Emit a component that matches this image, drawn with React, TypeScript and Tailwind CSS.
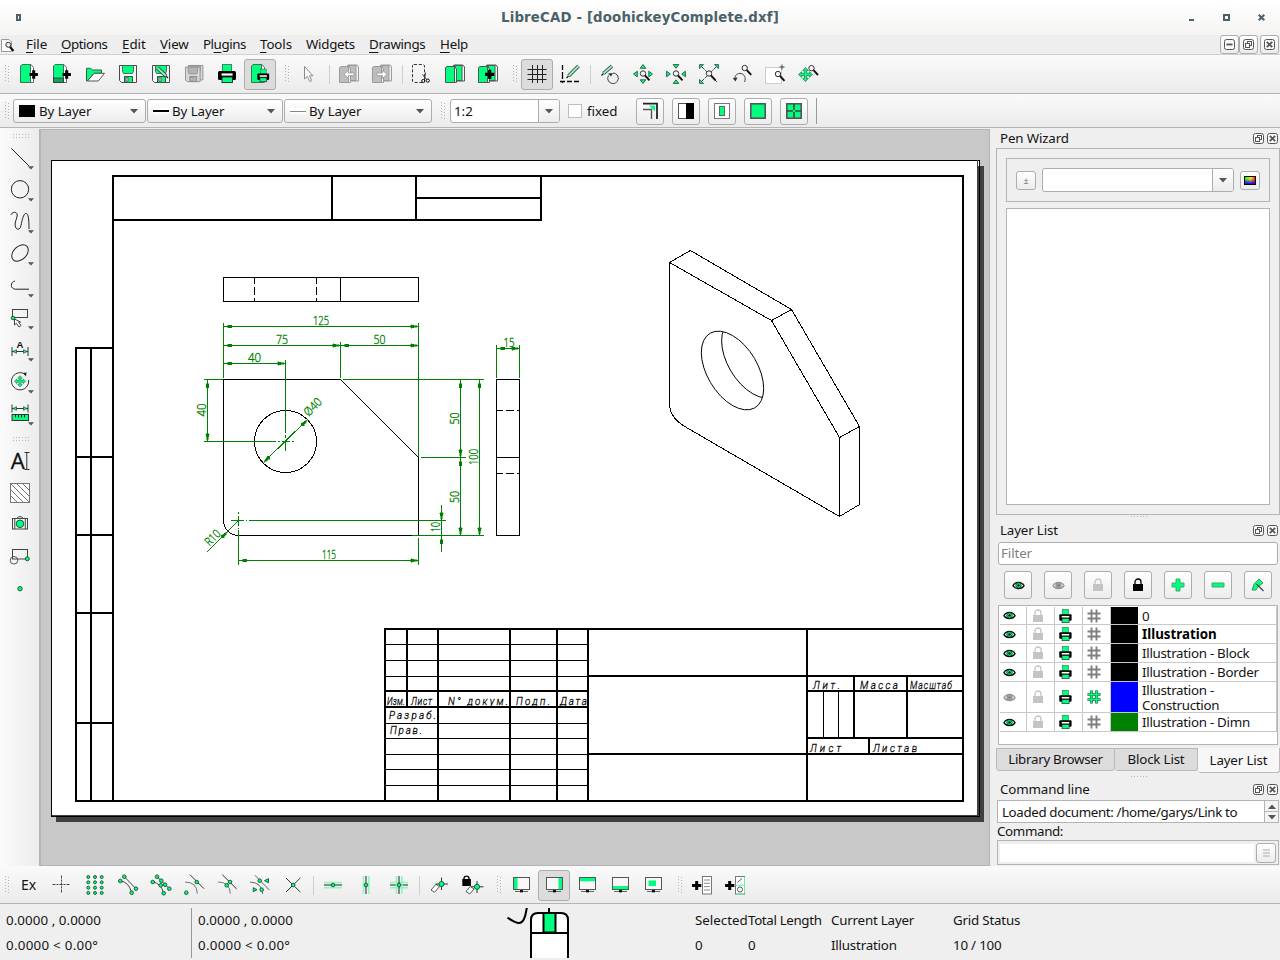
import React from "react";

const G = "#00ff7f";
const DK = "#3c3c3c";

/* ---------- small drawing primitives ---------- */

function Ico({ children, className = "" }: { children: React.ReactNode; className?: string }) {
  return (
    <svg viewBox="0 0 24 24" className={"h-6 w-6 shrink-0 overflow-visible " + className} fill="none" stroke={DK} strokeWidth={1}>
      {children}
    </svg>
  );
}

const Dot = ({ x, y, r = 1.8 }: { x: number; y: number; r?: number }) => (
  <circle cx={x} cy={y} r={r} fill={G} stroke="#14532d" strokeWidth={0.9} />
);

const Plus = ({ x, y, s = 4.2, w = 3 }: { x: number; y: number; s?: number; w?: number }) => (
  <path d={`M${x - s} ${y}H${x + s}M${x} ${y - s}V${y + s}`} stroke="#000" strokeWidth={w} />
);

const Mag = ({ x, y }: { x: number; y: number }) => (
  <g>
    <circle cx={x} cy={y} r={2.7} fill="#f4f4f4" stroke="#333" />
    <path d={`M${x + 2} ${y + 2}L${x + 6.5} ${y + 6.8}`} stroke="#111" strokeWidth={1.9} />
  </g>
);

const Move = ({ x, y, s }: { x: number; y: number; s: number }) => (
  <g transform={`translate(${x} ${y}) scale(${s / 6})`}>
    <path
      d="M0-6L2.4-3.4H1V-1H3.4V-2.4L6 0 3.4 2.4V1H1V3.4H2.4L0 6-2.4 3.4H-1V1H-3.4V2.4L-6 0-3.4-2.4V-1H-1V-3.4H-2.4Z"
      fill={G}
      stroke="#1f6b45"
      strokeWidth={0.6}
    />
  </g>
);

const Pencil = ({ x1, y1, x2, y2 }: { x1: number; y1: number; x2: number; y2: number }) => (
  <g>
    <path d={`M${x1} ${y1}L${x2} ${y2}`} stroke="#333" strokeWidth={3.6} />
    <path d={`M${x1} ${y1}L${x2} ${y2}`} stroke="#8df5bd" strokeWidth={1.9} />
    <path d={`M${x2} ${y2}l${x2 < x1 ? -2 : 2} 2`} stroke="#222" strokeWidth={1.2} />
  </g>
);

const Printer = () => (
  <g stroke="none">
    <rect x="7.5" y="2.5" width="9" height="7" fill={G} stroke="#2c6b4b" strokeWidth="0.8" />
    <rect x="3" y="9" width="18" height="9" rx="1.5" fill="#000" />
    <rect x="6.6" y="11.4" width="11" height="2.2" fill="#fff" />
    <rect x="7" y="15" width="10.4" height="5.6" fill={G} stroke="#222" strokeWidth="0.9" />
  </g>
);

const Floppy = ({ gray = false }: { gray?: boolean }) => (
  <g stroke={gray ? "#8a8a8a" : "#4a4a4a"}>
    <path d="M3.5 3.5H20.5V20.5H5.5L3.5 18.5Z" fill={gray ? "#d8d8d8" : "#f6f6f6"} />
    <path d="M6.5 3.5H17.5V9.5L16.5 11.5H7.5L6.5 9.5Z" fill={gray ? "#b3b3b3" : G} strokeWidth="0.8" />
    <rect x="8.5" y="14.5" width="8" height="6" fill={gray ? "#b3b3b3" : G} />
    <rect x="10" y="15.8" width="2" height="3.4" fill="#eee" strokeWidth="0.8" />
  </g>
);

const PagePair = ({ gray = false }: { gray?: boolean }) => (
  <g stroke={gray ? "#9a9a9a" : "#555"}>
    <path d="M11 3H20L21.5 5V19H11Z" fill="#f4f4f4" />
    <rect x="10.5" y="3.5" width="8.5" height="15" fill={gray ? "#bdbdbd" : G} />
    <path d="M2.5 5.5L4 4.5H12.5V20.5H2.5Z" fill={gray ? "#bdbdbd" : G} />
    <path d="M11.5 5L13.5 7V20.5H11.5Z" fill="#f4f4f4" />
  </g>
);

const NewDoc = ({ template = false }: { template?: boolean }) => (
  <g>
    <path d="M12 2.5H14L16.5 5.5V20.5H12Z" fill="#fafafa" stroke="#666" />
    <path d="M3.5 4L5 2.5H13.5V20.5H3.5Z" fill={G} stroke="#4a6a5a" />
    {template && <rect x="3.5" y="16" width="10" height="4.5" fill="#14a35c" stroke="#333" strokeWidth="0.8" />}
    <Plus x={16.7} y={12.5} />
  </g>
);

const Monitor = ({ x, y, w, h }: { x: number; y: number; w: number; h: number }) => (
  <g>
    <rect x="4.5" y="4.5" width="16" height="12" fill="#f7f7f7" stroke="#555" />
    <rect x={x} y={y} width={w} height={h} fill={G} stroke="none" />
    <path d="M6 18.5H19" stroke="#666" />
    <path d="M11 18.2H14" stroke="#000" strokeWidth="2.2" />
  </g>
);

/* ---------- icon tables ---------- */

const topIcons: Record<string, React.ReactNode> = {
  new: <NewDoc />,
  newTemplate: <NewDoc template />,
  open: (
    <g>
      <path d="M3.5 19V6.3H7.5L9.5 8H18.5V11.3H11L4.5 19Z" fill={G} stroke="#3a5a4a" />
      <path d="M4.5 19L11.3 11.3H21.5L15.3 19Z" fill="#fff" stroke="#555" />
    </g>
  ),
  save: <Floppy />,
  saveAs: (
    <g>
      <Floppy />
      <Pencil x1={8.5} y1={6} x2={17} y2={14} />
    </g>
  ),
  saveAll: (
    <g>
      <g transform="translate(3.5 0.5) scale(.85)"><Floppy gray /></g>
      <g transform="translate(0.5 2) scale(.86)"><Floppy gray /></g>
    </g>
  ),
  print: <Printer />,
  preview: (
    <g>
      <path d="M12 2.5H14L16.5 5.5V20.5H12Z" fill="#fafafa" stroke="#666" />
      <path d="M3.5 4L5 2.5H13.5V20.5H3.5Z" fill={G} stroke="#4a6a5a" />
      <g transform="translate(7.3 5.3) scale(.66 .7)"><Printer /></g>
    </g>
  ),
  select: <path d="M7.5 4.5V17L10.3 14.5L12.8 19.6L14.8 18.6L12.5 13.8H16Z" fill="#f8f8f8" stroke="#8c8c8c" />,
  undo: (
    <g>
      <PagePair gray />
      <path d="M7 12.3L11.5 8.3V11H17V13.6H11.5V16.4Z" fill="#fff" stroke="#999" strokeWidth=".8" />
    </g>
  ),
  redo: (
    <g>
      <PagePair gray />
      <path d="M17 12.3L12.5 8.3V11H7V13.6H12.5V16.4Z" fill="#fff" stroke="#999" strokeWidth=".8" />
    </g>
  ),
  cut: (
    <g>
      <rect x="2.5" y="2.5" width="12" height="18" rx="1.5" strokeDasharray="3 1.8" stroke="#333" />
      <path d="M15.5 10.5L14.3 18M12.5 12.5L17 18" stroke="#333" />
      <circle cx="13.3" cy="19" r="1.6" stroke="#111" />
      <circle cx="17.8" cy="18.6" r="1.6" stroke="#111" />
    </g>
  ),
  copy: <PagePair />,
  paste: (
    <g>
      <PagePair />
      <Plus x={13.7} y={12.3} s={4.6} w={3.2} />
    </g>
  ),
  grid: <path d="M2.5 7.5H21.5M2.5 12.5H21.5M2.5 17.5H21.5M7.5 3V21M12.5 3V21M17.5 3V21" stroke="#222" />,
  draft: (
    <g>
      <path d="M4.5 3V21" stroke="#000" strokeDasharray="5 2 7 2" strokeWidth="1.3" />
      <path d="M2 19.5H22" stroke="#000" strokeDasharray="5 2" strokeWidth="1.3" />
      <Pencil x1={20.5} y1={4} x2={10.5} y2={14} />
    </g>
  ),
  redraw: (
    <g>
      <Pencil x1={14} y1={4} x2={5.5} y2={11.5} />
      <path d="M10.5 13.5A5.3 5.3 0 1 0 15 11" stroke="#444" />
      <path d="M10 11.5L15 11 13 14.5Z" fill="#333" stroke="none" />
    </g>
  ),
  zoomIn: (
    <g>
      <g fill={G} stroke="#1f5a3c" strokeWidth=".9">
        <path d="M12 2.5L14.8 6.3H9.2Z" />
        <path d="M12 21.5L14.8 17.8H9.2Z" />
        <path d="M2.5 12L6.3 9.2V14.8Z" />
        <path d="M21.5 12L17.8 9.2V14.8Z" />
      </g>
      <Mag x={12} y={11.5} />
    </g>
  ),
  zoomOut: (
    <g>
      <g fill={G} stroke="#1f5a3c" strokeWidth=".9">
        <path d="M12 6.3L14.8 2.6H9.2Z" />
        <path d="M12 17.8L14.8 21.4H9.2Z" />
        <path d="M6.3 12L2.6 9.2V14.8Z" />
        <path d="M17.8 12L21.4 9.2V14.8Z" />
      </g>
      <Mag x={12} y={11.5} />
    </g>
  ),
  zoomAuto: (
    <g>
      <path d="M4 4L20 20M20 4L4 20" stroke="#444" strokeDasharray="5 1" />
      <g fill={G} stroke="#1f5a3c" strokeWidth=".9">
        <path d="M2.6 2.6H6.5L2.6 6.5Z" />
        <path d="M21.4 2.6H17.5L21.4 6.5Z" />
        <path d="M2.6 21.4V17.5L6.5 21.4Z" />
      </g>
      <Mag x={12} y={11.5} />
    </g>
  ),
  zoomPrev: (
    <g>
      <path d="M5 17.5C4.5 12.5 8 11 11 11.5S16.5 15.5 14.5 20" stroke="#444" />
      <path d="M2.8 16L7.6 15.4 5.5 19.5Z" fill="#333" stroke="none" />
      <Mag x={14.7} y={6} />
    </g>
  ),
  zoomWindow: (
    <g>
      <rect x="2.5" y="5.5" width="16" height="16" fill="#fff" stroke="#ccc" />
      <path d="M16.5 5H21.5M19 2.5V7.5" stroke="#444" />
      <Mag x={15} y={12} />
    </g>
  ),
  zoomPan: (
    <g>
      <Move x={9.5} y={12.5} s={7} />
      <Mag x={15.5} y={6.2} />
    </g>
  ),
};

const HaloH = () => (
  <g>
    <path d="M3 9.5H21M3 14.8H21" stroke="#8ef7c0" strokeWidth="1.6" />
    <path d="M3 12H21" stroke="#222" />
  </g>
);
const HaloV = () => (
  <g>
    <path d="M9.5 3V21M14.8 3V21" stroke="#8ef7c0" strokeWidth="1.6" />
    <path d="M12 3V21" stroke="#222" />
  </g>
);

const snapIcons: Record<string, React.ReactNode> = {
  free: <path d="M2.5 11.5H20.5M11.5 2.5V20.5" stroke="#444" strokeDasharray="3 1 2 1" />,
  grid: (
    <g>
      {[5.3, 12, 18.7].map((x) => [4, 9.3, 14.7, 19.9].map((y) => <Dot key={`${x}-${y}`} x={x} y={y} r={1.5} />))}
    </g>
  ),
  endpoint: (
    <g>
      <path d="M8.3 3.7L20 15.7M4.3 8Q13 9 15.7 19.7" stroke="#444" />
      <Dot x={8.3} y={3.7} /><Dot x={4.3} y={8} /><Dot x={20} y={15.7} /><Dot x={15.7} y={19.7} />
    </g>
  ),
  entity: (
    <g>
      <path d="M8 3.7L20.3 15.7M3.7 9Q12 10 14.7 20.3" stroke="#444" />
      {[[8, 3.7], [3.7, 9], [12.3, 7.7], [11.7, 12.3], [16, 11.7], [20.3, 15.7], [14.7, 20.3]].map(([x, y]) => (
        <Dot key={`${x}-${y}`} x={x} y={y} />
      ))}
    </g>
  ),
  center: (
    <g>
      <path d="M8 1.7L22 15.7" stroke="#333" /><path d="M3 9Q15 9 15.3 20.7" stroke="#777" />
      <Dot x={14.7} y={9} /><Dot x={4.3} y={19.7} />
    </g>
  ),
  middle: (
    <g>
      <path d="M7.3 1.7L21.7 16" stroke="#333" /><path d="M3 9Q15 9 15.3 20.7" stroke="#777" />
      <Dot x={15} y={9} /><Dot x={11.7} y={12.3} />
    </g>
  ),
  distance: (
    <g>
      <path d="M7 2.3L21.3 17M2 9Q14 9.5 14.7 21" stroke="#666" />
      <Dot x={11.7} y={7.7} /><Dot x={13.7} y={16.7} />
      <path d="M16.5 7.7L20.5 5.7V9.7Z M9 16.7L5.3 14.7V18.7Z" fill={G} stroke="#14532d" strokeWidth=".9" />
    </g>
  ),
  intersection: (
    <g>
      <path d="M5 5L19.3 19M19.3 5L5 19" stroke="#333" />
      <Dot x={12.2} y={12} />
    </g>
  ),
  horiz: <g><HaloH /><Dot x={12} y={12} /></g>,
  vert: <g><HaloV /><Dot x={12} y={12} /></g>,
  ortho: <g><HaloH /><HaloV /><Dot x={12} y={12} /></g>,
  relZero: (
    <g>
      <path d="M4 17L9 11.3L12.5 13.7L7.5 19.3Z" fill="#fff" stroke="#555" />
      <path d="M8.5 11H21M14.5 4.5V17" stroke="#333" />
      <Dot x={14.5} y={11} r={2.6} />
    </g>
  ),
  lockZero: (
    <g>
      <path d="M4 6V5A2.6 2.6 0 0 1 9 5V6" stroke="#000" strokeWidth="1.4" />
      <rect x="2.3" y="6" width="8.6" height="7" fill="#000" stroke="none" />
      <path d="M6 18.5L10.3 13.5L14 16L9.7 21Z" fill="#fff" stroke="#555" />
      <path d="M11 13.8H23.5M17 8V20" stroke="#333" />
      <Dot x={17} y={13.8} r={2.6} />
    </g>
  ),
  dockLeft: <Monitor x={5} y={5} w={3.5} h={11} />,
  dockRight: <Monitor x={16.5} y={5} w={3.5} h={11} />,
  dockTop: <Monitor x={5} y={5} w={15} h={3.3} />,
  dockBottom: <Monitor x={5} y={13} w={15} h={3} />,
  dockFloat: <Monitor x={7.5} y={7.5} w={7.5} h={5.5} />,
  addMenu: (
    <g>
      <Plus x={6.7} y={12.5} s={4.6} />
      <rect x="12.5" y="3.5" width="9" height="17.5" fill="#fff" stroke="#777" />
      <path d="M14 7H20M14 10.3H20M14 13.6H20M14 17H20" stroke="#888" />
    </g>
  ),
  addToolbar: (
    <g>
      <Plus x={6.7} y={12.5} s={4.6} />
      <rect x="12.5" y="3.5" width="9" height="17.5" fill="#fff" stroke="#777" />
      <path d="M12.5 12.2H21.5M13 20.8H21.5M21.5 4V20" stroke="#65f0a6" />
      <path d="M14.5 9.5L19 5.5" stroke="#555" />
      <circle cx="17" cy="16.5" r="2.6" stroke="#555" />
    </g>
  ),
};

const Drop = () => <path d="M19.8 20.2H26L23 23.6Z" fill="#555" stroke="none" />;

const sideIcons: React.ReactNode[] = [
  <path d="M3.3 2.3L21 20" stroke="#222" />,
  <circle cx="12" cy="11.3" r="8.7" stroke="#222" />,
  <path d="M3 5C3.5 2 9.3 1 9.2 5C9 9 6.5 12 7.2 15.5C8 20.5 12 20.5 13 15.5C14 10 15.5 4 17.7 3.4C20.5 3 21 10 21 19" stroke="#222" />,
  <ellipse cx="12" cy="11" rx="9.6" ry="6.6" transform="rotate(-45 12 11)" stroke="#222" />,
  <path d="M7 7C2 8 2 15 7.5 15.2H21" stroke="#222" />,
  <g>
    <rect x="4.5" y="3.5" width="15" height="8" stroke="#444" />
    <path d="M6.5 13V19L8.3 17.3L11 21L13 19.5L10.5 16H12.5Z" fill="#fff" stroke="#444" />
    <Dot x={5} y={12} />
  </g>,
  <g>
    <path d="M4 9V18M20 9V18M4 13.5H20" stroke="#333" />
    <path d="M5 13.5L8.5 11.7V15.3ZM19 13.5L15.5 11.7V15.3Z" fill={G} stroke="#14532d" strokeWidth=".7" />
    <text x="12" y="10.2" textAnchor="middle" fontSize="9.5" fontWeight="bold" fontFamily="Liberation Sans, sans-serif" fill="#111" stroke="none">A</text>
  </g>,
  <g>
    <path d="M17 4.2A8.6 8.6 0 1 0 20.6 10" stroke="#333" />
    <path d="M15 3L18.5 2.5L18 6.5Z" fill="#222" stroke="none" />
    <Move x={12} y={11.3} s={5.6} />
  </g>,
  <g>
    <path d="M4 2.5V10.5M20 2.5V10.5M4 6.5H20" stroke="#333" />
    <path d="M5 6.5L8.5 4.7V8.3ZM19 6.5L15.5 4.7V8.3Z" fill={G} stroke="#14532d" strokeWidth=".7" />
    <rect x="4" y="12.5" width="16.5" height="6" fill={G} stroke="#333" />
    <path d="M7.5 13V15.5M10.5 13V15.5M13.5 13V15.5M16.5 13V15.5" stroke="#222" />
  </g>,
];

const sideIcons2: React.ReactNode[] = [
  <g>
    <text x="2.8" y="20" fontSize="21.5" fontFamily="Open Sans, sans-serif" fill="#111" stroke="#111" strokeWidth=".3" textLength="14" lengthAdjust="spacingAndGlyphs">A</text>
    <path d="M16.5 3.5H21.5M18.8 3.5V20.5M16.5 20.5H21.5" stroke="#333" />
  </g>,
  <g>
    <rect x="2.5" y="2.5" width="19" height="19" stroke="#777" fill="#fff" />
    <path d="M3 15L9 21M3 9L15 21M3 3L21 21M9 3L21 15M15 3L21 9" stroke="#777" />
  </g>,
  <g>
    <rect x="4.5" y="5.5" width="15" height="10.5" stroke="#444" fill="#f6f6f6" />
    <path d="M9 5.5C9.5 3 14.5 3 15 5.5M6.8 6V16M17.3 6V16" stroke="#444" />
    <circle cx="12" cy="10.8" r="3.8" fill={G} stroke="#1f5a3c" />
  </g>,
  <g>
    <rect x="4.5" y="4.5" width="15" height="9.5" stroke="#444" />
    <circle cx="6" cy="15.3" r="3.8" stroke="#555" />
    <Dot x={19.3} y={13.8} r={2} />
  </g>,
  <Dot x={12} y={11.7} r={2.2} />,
];

/* ---------- widgets ---------- */

const GripV = () => (
  <svg viewBox="0 0 6 18" className="h-[18px] w-[6px] shrink-0 self-center" fill="#b4b4b4" shapeRendering="crispEdges">
    {[0, 3, 6, 9, 12, 15].map((y) => (
      <g key={y}><rect x="0" y={y} width="1" height="1" /><rect x="3" y={y + 1} width="1" height="1" /></g>
    ))}
  </svg>
);

const GripH = ({ rows = 2 }: { rows?: number }) => (
  <svg viewBox="0 0 18 5" className="h-[5px] w-[18px] shrink-0" fill="#b4b4b4" shapeRendering="crispEdges">
    {[0, 3, 6, 9, 12, 15].map((x) => (
      <g key={x}><rect x={x} y="0" width="1" height="1" />{rows > 1 && <rect x={x} y="3" width="1" height="1" />}</g>
    ))}
  </svg>
);

function ToolCell({ icon, active = false }: { icon: React.ReactNode; active?: boolean }) {
  return (
    <div className="flex h-8 w-[33px] shrink-0 pt-px">
      <div className={active
        ? "h-[31px] w-8 rounded-[3px] border border-[#adadad] bg-[#dcdcdc] pt-[2px] pl-[3px]"
        : "h-[31px] w-8 pt-[3px] pl-1"}>
        <Ico>{icon}</Ico>
      </div>
    </div>
  );
}

const Sep = () => (
  <div className="flex h-8 w-[7px] shrink-0 items-center pl-[3px]"><div className="h-[19px] w-px bg-[#cfcfcf]" /></div>
);
const GripCell = () => <div className="flex h-8 w-4 shrink-0 items-center pl-2"><GripV /></div>;

function ToolRow({ items, table }: { items: string[]; table: Record<string, React.ReactNode> }) {
  return (
    <>
      {items.map((n, i) =>
        n === "|" ? <Sep key={i} /> : n === ":" ? <GripCell key={i} /> : (
          <ToolCell key={i} icon={table[n.replace("*", "")]} active={n.endsWith("*")} />
        )
      )}
    </>
  );
}

const Caret = () => (
  <svg viewBox="0 0 8 5" className="h-[5px] w-2 shrink-0"><path d="M0 0H8L4 4.6Z" fill="#555" /></svg>
);

const frame = "border border-[#adadad] rounded-[3px] bg-linear-to-b from-white to-[#ececec]";

function Combo({ width, children }: { width: string; children: React.ReactNode }) {
  return (
    <div className={`${frame} ${width} flex h-6 shrink-0 items-center pr-[7px]`}>
      {children}
      <span className="grow pt-[2px] tracking-[-0.1px]">By Layer</span>
      <Caret />
    </div>
  );
}

function SquareBtn({ children, size }: { children: React.ReactNode; size: string }) {
  return <div className={`${frame} ${size} flex shrink-0 items-center justify-center`}>{children}</div>;
}

const WinGlyph = ({ kind }: { kind: "min" | "restore" | "close" }) => (
  <svg viewBox="0 0 11 11" className="h-[11px] w-[11px] shrink-0" fill="none" stroke="#555">
    <rect x=".5" y=".5" width="10" height="10" rx="2" fill="#f8f8f8" />
    {kind === "min" && <path d="M2.5 5.5H8.5" strokeWidth="1.8" />}
    {kind === "restore" && <g><rect x="4.5" y="2.5" width="4" height="4" /><rect x="2.5" y="4.5" width="4" height="4" fill="#f8f8f8" /></g>}
    {kind === "close" && <path d="M2.8 2.8L8.2 8.2M8.2 2.8L2.8 8.2" strokeWidth="1.8" />}
  </svg>
);

function DockTitle({ text, className }: { text: string; className: string }) {
  return (
    <div className={`${className} flex shrink-0 items-center pr-[2px] pl-[10px]`}>
      <span className="grow tracking-[-0.15px]">{text}</span>
      <div className="flex gap-[3px] pb-px"><WinGlyph kind="restore" /><WinGlyph kind="close" /></div>
    </div>
  );
}

const Eye = ({ on = true }: { on?: boolean }) => (
  <svg viewBox="0 0 14 10" className="h-[9px] w-[13px]">
    <path d="M.7 5.2C3.5.2 10.5.2 13.3 5.2C10.5 9.6 3.5 9.6.7 5.2Z" fill={on ? "#c9ffe3" : "#e4e4e4"} stroke={on ? "#000" : "#999"} strokeWidth="1.3" />
    <circle cx="7" cy="4.9" r="3" fill={on ? G : "#aaa"} stroke={on ? "#0a3d24" : "#888"} />
    <circle cx="7" cy="4.9" r="1.3" fill={on ? "#000" : "#777"} />
  </svg>
);

const Lock = ({ on = false }: { on?: boolean }) => (
  <svg viewBox="0 0 12 14" className="h-[14px] w-3">
    <path d="M3 6V4A3 3 0 0 1 9 4V6" fill="none" stroke={on ? "#000" : "#c4c4c4"} strokeWidth="1.3" />
    <rect x="1" y="6" width="10" height="7" fill={on ? "#000" : "#c4c4c4"} />
  </svg>
);

const Hash = ({ on = false }: { on?: boolean }) => (
  <svg viewBox="0 0 14 14" className="h-[14px] w-[14px]" fill="none">
    <path d="M4.5 .5V13.5M9.5 .5V13.5M.5 4.5H13.5M.5 9.5H13.5" stroke={on ? "#14532d" : "#808080"} strokeWidth={on ? 2.6 : 1.9} />
    {on && <path d="M4.5 1V13M9.5 1V13M1 4.5H13M1 9.5H13" stroke={G} strokeWidth="1.5" />}
  </svg>
);

const layers = [
  { name: "0", h: "h-[18px]", color: "bg-black", on: true, con: false },
  { name: "Illustration", h: "h-[19px]", color: "bg-black", on: true, con: false, bold: true },
  { name: "Illustration - Block", h: "h-[19px]", color: "bg-black", on: true, con: false },
  { name: "Illustration - Border", h: "h-[19px]", color: "bg-black", on: true, con: false },
  { name: "Illustration - Construction", h: "h-[31px]", color: "bg-[#0000ff]", on: false, con: true },
  { name: "Illustration - Dimn", h: "h-[19px]", color: "bg-[#008000]", on: true, con: false },
];

/* ---------- drawing ---------- */

const T = ({ x, y, w, s, size = 11.8, rot = 0 }: { x: number; y: number; w: number; s: string; size?: number; rot?: number }) => (
  <text x={x} y={y} textLength={w} lengthAdjust="spacingAndGlyphs" fontSize={size}
    fontFamily="Open Sans, Noto Sans, sans-serif" fontWeight={300} transform={rot ? `rotate(${rot} ${x} ${y})` : undefined}>{s}</text>
);

/* condensed oblique lettering: glyphs are narrowed, then spread over the given width */
const R = ({ x, y, w, s, k = 0.85 }: { x: number; y: number; w: number; s: string; k?: number }) => (
  <text transform={`translate(${x} ${y}) scale(${k} 1)`} textLength={w / k} lengthAdjust="spacing" fontSize={11.6} fontStyle="italic"
    fontWeight={300} fontFamily="Roboto, Liberation Sans, sans-serif">{s}</text>
);

/* filled arrow tip at x,y pointing along the given angle */
const Tip = ({ x, y, a }: { x: number; y: number; a: number }) => (
  <path d="M0 0L-8-1.7V1.7Z" transform={`translate(${x + 0.5} ${y + 0.5}) rotate(${a})`} fill="#008000" stroke="#008000" strokeWidth=".5" />
);

function Drawing() {
  return (
    <svg viewBox="41 130 948 735" className="h-[735px] w-[948px]" fill="none" shapeRendering="crispEdges">
      <rect x="56" y="166" width="928" height="656" fill="#404040" />
      <rect x="51" y="160" width="928" height="656" fill="#fff" />
      <rect x="977" y="166" width="3" height="650" fill="#404040" />
      <rect x="51.5" y="160.5" width="928" height="656" stroke="#000" />
      <path d="M977.5 160V166M52 815.5H979" stroke="#404040" />

      <g stroke="#000" strokeWidth="2">
        <path d="M113 175V801M112 176H964M963 175V802M75 801H964" />
        <path d="M113 220H541V176M332 176V220M416 176V220M416 198H541" />
        <path d="M113 348H76V801M91 348V801M76 457H113M76 535H113M76 613H113M76 723H113" />
        <path d="M385 801V629H963M407 629V707M438 629V801M510 629V801M557 629V801M588 629V801M385 691H588M385 707H588" />
        <path d="M588 676H963M588 754H963M807 629V801M807 691H963M807 738H963M854 676V738M907 676V738M869 738V754" />
      </g>

      <g transform="translate(.5 .5)" stroke="#000">
        <path d="M385 644H588M385 660H588M385 676H588M385 723H588M385 738H588M385 754H588M385 769H588M385 785H588M823 691V738M838 691V738" />
        <path d="M223 277H418V301H223ZM340 277V301" />
        <path d="M254 277V283M254 286V294M254 297V301M316 277V283M316 286V294M316 297V301" />
        <path d="M223 379H340L418 457V535H238A15 15 0 0 1 223 520Z" />
        <circle cx="285" cy="441" r="31" />
        <path d="M496 379H519V535H496ZM496 457H519M496 410H502M505 410H513M516 410H519M496 473H502M505 473H513M516 473H519" />
        <path d="M669 262L690 250L791 309L859 426V504L839 516L686 427C675 421 669 413 669 403ZM669 262L771 320L839 437V516M771 320L791 309M839 437L859 426" />
        <clipPath id="bore"><ellipse rx="36" ry="35" transform="matrix(.866 .5 0 1 732 370)" /></clipPath>
        <ellipse rx="36" ry="35" transform="matrix(.866 .5 0 1 732 370)" vectorEffect="non-scaling-stroke" />
        <g clipPath="url(#bore)">
          <ellipse rx="36" ry="35" transform="matrix(.866 .5 0 1 752.3 358.3)" vectorEffect="non-scaling-stroke" />
        </g>
      </g>

      <g transform="translate(.5 .5)" stroke="#008000">
        <path d="M223 322V377M418 322V456M223 326H418M223 345H418M340 341V377M223 363H285M285 359V432M285 434V437M285 439V450" />
        <path d="M203 379H222M203 441H275M277 441H279M281 441H289M291 441H293M207 379V441" />
        <path d="M342 379H483M411 535H483M420 457H465M460 379V535M479 379V535" />
        <path d="M496 344V377M519 344V377M496 348H519" />
        <path d="M230 520H243M245 520H246M248 520H445M238 511V513M238 515V525M238 527V528M238 529V564M418 537V564M238 560H418" />
        <path d="M441 504V551M263 462L307 419M206 552L238 520" />
      </g>
      <g>
        <Tip x={223} y={326} a={180} /><Tip x={418} y={326} a={0} />
        <Tip x={223} y={345} a={180} /><Tip x={340} y={345} a={0} /><Tip x={340} y={345} a={180} /><Tip x={418} y={345} a={0} />
        <Tip x={223} y={363} a={180} /><Tip x={285} y={363} a={0} />
        <Tip x={207} y={379} a={-90} /><Tip x={207} y={441} a={90} />
        <Tip x={460} y={379} a={-90} /><Tip x={460} y={457} a={90} /><Tip x={460} y={457} a={-90} /><Tip x={460} y={535} a={90} />
        <Tip x={479} y={379} a={-90} /><Tip x={479} y={535} a={90} />
        <Tip x={496} y={348} a={180} /><Tip x={519} y={348} a={0} />
        <Tip x={238} y={560} a={180} /><Tip x={418} y={560} a={0} />
        <Tip x={441} y={520} a={90} /><Tip x={441} y={535} a={-90} />
        <Tip x={263} y={462} a={135} /><Tip x={307} y={419} a={-45} /><Tip x={227} y={531} a={-45} />
      </g>
      <g fill="#008000" stroke="#008000" strokeWidth=".35">
        <T x={313} y={325} w={16} s="125" /><T x={276} y={343.5} w={12} s="75" /><T x={373.5} y={343.5} w={12} s="50" />
        <T x={248} y={362} w={13} s="40" /><T x={503.5} y={347} w={11} s="15" /><T x={322} y={559} w={14} s="115" />
        <T x={206} y={416.5} w={13} s="40" rot={-90} /><T x={459} y={424.5} w={12} s="50" rot={-90} />
        <T x={459} y={503} w={12} s="50" rot={-90} /><T x={478} y={465} w={16} s="100" rot={-90} />
        <T x={440} y={532} w={10} s="10" rot={-90} /><T x={308.5} y={417} w={20} s="Ø40" rot={-45} />
        <T x={209.5} y={546.5} w={17} s="R10" rot={-45} />
      </g>
      <g fill="#000" stroke="#000" strokeWidth=".3">
        <R x={387} y={705} w={18} s="Изм." k={0.7} /><R x={411} y={705} w={21} s="Лист" k={0.75} /><R x={448} y={705} w={60} s="N° докум." />
        <R x={516} y={705} w={34} s="Подп." /><R x={560} y={705} w={27} s="Дата" />
        <R x={389} y={719.4} w={47} s="Разраб." /><R x={390} y={734} w={32} s="Прав." />
        <R x={813} y={689} w={27} s="Лит." /><R x={860} y={689} w={38} s="Масса" /><R x={910} y={689} w={42} s="Масштаб" k={0.75} />
        <R x={810} y={752} w={31} s="Лист" /><R x={873} y={752} w={44} s="Листав" />
      </g>
    </svg>
  );
}

/* ---------- page ---------- */

const menus: [string, string, string, string][] = [
  ["", "F", "ile", "w-[35px]"], ["", "O", "ptions", "w-[61px] tracking-[-0.45px]"], ["", "E", "dit", "w-[38px]"], ["", "V", "iew", "w-[43px] tracking-[-0.15px]"],
  ["Pl", "u", "gins", "w-[57px] tracking-[-0.45px]"], ["", "T", "ools", "w-[46px] tracking-[-0.1px]"], ["Widgets", "", "", "w-[63px] tracking-[-0.3px]"], ["", "D", "rawings", "w-[71px] tracking-[-0.35px]"],
  ["", "H", "elp", "w-[40px] tracking-[-0.25px]"],
];

const statusGroups: [string, string, string][] = [
  ["Selected", "0", "w-[53px]"],
  ["Total Length", "0", "w-[83px] tracking-[-0.35px]"],
  ["Current Layer", "Illustration", "w-[122px] tracking-[-0.2px]"],
  ["Grid Status", "10 / 100", "w-[100px] tracking-[-0.2px]"],
];

const Coords = () => (
  <>
    <div className="h-[25px] leading-[25px] tracking-[0.07px]">0.0000 , 0.0000</div>
    <div className="h-[25px] leading-[25px] tracking-[0.28px]">0.0000 &lt; 0.00°</div>
  </>
);

export default function App() {
  return (
    <div className="flex h-[960px] w-[1280px] flex-col overflow-hidden bg-[#efefef] font-['Noto_Sans',sans-serif] text-[13.33px] leading-none whitespace-nowrap text-[#141414]">
      {/* title bar */}
      <div className="flex h-[35px] shrink-0 items-center bg-linear-to-b from-white to-[#f5f4f3] text-[#4b616a]">
        <div className="w-[200px] pl-4">
          <svg viewBox="0 0 5 7" className="h-[7px] w-[5px]" fill="#4b616a" shapeRendering="crispEdges"><path d="M0 0H5V7H0ZM2 2V5H3V2Z" fillRule="evenodd" /></svg>
        </div>
        <div className="grow text-center font-['DejaVu_Sans',sans-serif] text-[13.33px] font-bold tracking-[0.15px]">LibreCAD - [doohickeyComplete.dxf]</div>
        <div className="flex w-[200px] items-center justify-end gap-7 pr-[15px]">
          <svg viewBox="0 0 7 7" className="h-[7px] w-[7px]"><path d="M1 5H6V7H1Z" fill="currentColor" /></svg>
          <svg viewBox="0 0 7 7" className="h-[7px] w-[7px]"><rect x="1" y="1" width="5" height="5" fill="none" stroke="currentColor" strokeWidth="2" /></svg>
          <svg viewBox="0 0 7 7" className="h-[7px] w-[7px]"><path d="M.7 .7L6.3 6.3M6.3 .7L.7 6.3" stroke="currentColor" strokeWidth="2" /></svg>
        </div>
      </div>

      {/* menu bar */}
      <div className="flex h-5 shrink-0 items-center border-b border-[#d0d0d0] bg-[#eeeeee]">
        <svg viewBox="0 0 26 16" className="h-4 w-[26px]" fill="none" stroke="#999">
          <path d="M1.5 2.5H9L11.5 5V14.5H1.5Z" fill="#fff" />
          <circle cx="8.3" cy="7.8" r="2.5" stroke="#333" fill="#eee" /><path d="M10 10L13.5 14" stroke="#111" strokeWidth="2" />
        </svg>
        {menus.map(([a, u, b, w]) => (
          <div key={a + u} className={w}>{a}<span className="underline underline-offset-3">{u}</span>{b}</div>
        ))}
        <div className="grow" />
        <div className="flex pr-[1px]">
          <SquareBtn size="h-[19px] w-[19px]"><WinGlyph kind="min" /></SquareBtn>
          <SquareBtn size="h-[19px] w-[19px]"><WinGlyph kind="restore" /></SquareBtn>
          <div className="w-[2px]" />
          <SquareBtn size="h-[19px] w-[19px]"><WinGlyph kind="close" /></SquareBtn>
        </div>
      </div>

      {/* main toolbar */}
      <div className="flex h-[39px] shrink-0 border-b border-[#b4b4b4] bg-linear-to-b from-[#fafafa] to-[#ebebeb] pt-[3px] pl-[5px]">
        <div className="flex h-8 w-2 items-center"><GripV /></div>
        <ToolRow table={topIcons} items={["new", "newTemplate", "open", "save", "saveAs", "saveAll", "print", "preview*", ":", "select", "|", "undo", "redo", "|", "cut", "copy", "paste", ":", "grid*", "draft", "|", "redraw", "zoomIn", "zoomOut", "zoomAuto", "zoomPrev", "zoomWindow", "zoomPan"]} />
      </div>

      {/* pen toolbar */}
      <div className="flex h-[34px] shrink-0 items-center border-b border-[#b4b4b4] bg-linear-to-b from-[#fafafa] to-[#ebebeb] pt-px pl-[5px]">
        <div className="flex w-2"><GripV /></div>
        <Combo width="w-[133px]"><div className="mr-[4px] ml-[5px] h-3 w-4 bg-black" /></Combo>
        <div className="w-px" />
        <Combo width="w-[136px]"><div className="mr-[3px] ml-[5px] flex h-[6px] w-4 items-center bg-white"><div className="h-[2px] w-4 bg-black" /></div></Combo>
        <div className="w-px" />
        <Combo width="w-[148px]"><div className="mr-[3px] ml-[5px] flex h-[6px] w-4 items-center bg-white"><div className="h-px w-4 bg-[#888]" /></div></Combo>
        <div className="flex w-[18px] pl-[9px]"><GripV /></div>
        <div className="flex h-6 w-[110px] overflow-hidden rounded-[3px] border border-[#adadad] bg-white">
          <div className="flex grow items-center pt-[2px] pl-[3px]">1:2</div>
          <div className="flex w-[21px] items-center justify-center border-l border-[#adadad] bg-linear-to-b from-white to-[#ececec]"><Caret /></div>
        </div>
        <div className="ml-2 h-[14px] w-[14px] border border-[#bdbdbd] bg-white" />
        <div className="w-[54px] pt-[2px] pl-[5px]">fixed</div>
        <div className="flex gap-2">
          <SquareBtn size="h-[27px] w-7">
            <svg viewBox="0 0 18 18" className="h-[18px] w-[18px]" fill="none" stroke="#222"><path d="M2 1.7H16V17" strokeWidth="1.8" /><path d="M2 7.5H10.5V17" stroke="#555" strokeWidth="1.4" /><path d="M8 3.5H14V9.5Z" fill={G} stroke="none" /></svg>
          </SquareBtn>
          <SquareBtn size="h-[27px] w-7">
            <svg viewBox="0 0 18 18" className="h-[18px] w-[18px]"><rect x="1.5" y="1.5" width="15" height="15" fill="#fff" stroke="#555" /><rect x="9" y="1" width="8" height="16" fill="#000" /></svg>
          </SquareBtn>
          <SquareBtn size="h-[27px] w-7">
            <svg viewBox="0 0 18 18" className="h-[18px] w-[18px]"><rect x="1.5" y="1.5" width="15" height="15" fill="#fff" stroke="#777" /><rect x="6.5" y="4.5" width="5" height="9" fill={G} stroke="#666" /></svg>
          </SquareBtn>
          <SquareBtn size="h-[27px] w-7">
            <svg viewBox="0 0 18 18" className="h-[18px] w-[18px]"><rect x="1.8" y="1.8" width="14.4" height="14.4" fill={G} stroke="#555" strokeWidth="1.6" /></svg>
          </SquareBtn>
          <SquareBtn size="h-[27px] w-7">
            <svg viewBox="0 0 18 18" className="h-[18px] w-[18px]"><rect x="1.8" y="1.8" width="14.4" height="14.4" fill={G} stroke="#555" strokeWidth="1.6" /><path d="M9 2V16M2 9H16" stroke="#444" strokeWidth="1.6" /><rect x="8" y="8" width="2" height="2" fill={G} /></svg>
          </SquareBtn>
        </div>
        <div className="ml-2 h-[26px] w-px bg-[#999]" />
      </div>

      {/* work area */}
      <div className="flex h-[738px] shrink-0">
        <div className="flex w-[39px] flex-col items-center bg-linear-to-r from-[#fbfbfb] to-[#ececec] pt-[6px]">
          <div className="flex h-[8px] w-full justify-center pl-[4px]"><GripH /></div>
          {sideIcons.map((ic, i) => (
            <div key={i} className="flex h-8 w-full shrink-0 items-center pl-2"><Ico>{ic}<Drop /></Ico></div>
          ))}
          <div className="flex h-[15px] w-full items-center justify-center pt-[3px] pl-[4px]"><GripH /></div>
          {sideIcons2.map((ic, i) => (
            <div key={i} className="flex h-8 w-full shrink-0 items-center pl-2"><Ico>{ic}</Ico></div>
          ))}
        </div>
        <div className="mt-px flex w-[951px] flex-col border border-l-2 border-[#b4b4b4] bg-[#c8c8c8]">
          <Drawing />
        </div>

        {/* docks */}
        <div className="flex w-[290px] flex-col">
          <DockTitle text="Pen Wizard" className="h-5 pt-[2px]" />
          <div className="ml-[6px] h-[367px] w-[284px] shrink-0 border border-[#b4b4b4] px-[9px] pt-[9px]">
            <div className="flex h-11 items-center border border-[#b4b4b4] pl-[9px]">
              <SquareBtn size="h-[19px] w-5"><span className="text-[9px] text-[#777]">±</span></SquareBtn>
              <div className="ml-[6px] flex h-6 w-48 overflow-hidden rounded-[3px] border border-[#adadad] bg-white">
                <div className="grow" />
                <div className="flex w-[21px] items-center justify-center border-l border-[#adadad] bg-linear-to-b from-white to-[#ececec]"><Caret /></div>
              </div>
              <div className="ml-[6px]">
                <SquareBtn size="h-[19px] w-5">
                  <div className="h-[9px] w-3 border border-black bg-[linear-gradient(90deg,#00ff2a,#ffe600_60%,#ff2200)]">
                    <div className="h-full w-full bg-[linear-gradient(0deg,#2a00ff_5%,#ff00c800_75%)]" />
                  </div>
                </SquareBtn>
              </div>
            </div>
            <div className="mt-[6px] h-[297px] border border-[#b4b4b4] bg-white" />
          </div>
          <div className="flex h-[6px] shrink-0 justify-center pt-[1px] pl-[9px]"><GripH rows={1} /></div>
          <DockTitle text="Layer List" className="h-[21px] pb-[1px]" />
          <div className="ml-2 flex h-[23px] w-[280px] shrink-0 items-center rounded-[3px] border border-[#adadad] bg-white pt-px pl-[2px] tracking-[-0.1px] text-[#7f7f7f]">Filter</div>
          <div className="flex h-10 shrink-0 items-center gap-3 pl-[14px]">
            <SquareBtn size="h-7 w-7"><Eye /></SquareBtn>
            <SquareBtn size="h-7 w-7"><Eye on={false} /></SquareBtn>
            <SquareBtn size="h-7 w-7"><Lock /></SquareBtn>
            <SquareBtn size="h-7 w-7"><Lock on /></SquareBtn>
            <SquareBtn size="h-7 w-7"><svg viewBox="0 0 14 14" className="h-[14px] w-[14px]"><path d="M5 1H9V5H13V9H9V13H5V9H1V5H5Z" fill={G} stroke="#3fae77" /></svg></SquareBtn>
            <SquareBtn size="h-7 w-7"><svg viewBox="0 0 14 14" className="h-[14px] w-[14px]"><path d="M1 5H13V9H1Z" fill={G} stroke="#3fae77" /></svg></SquareBtn>
            <SquareBtn size="h-7 w-7"><svg viewBox="0 0 14 14" className="h-[14px] w-[14px]"><path d="M1 12L3 6L8 1L12 5L7 9L5 12Z" fill={G} stroke="#3c7a5b" strokeWidth=".8" /><path d="M5.5 6L12.5 13" stroke="#444" strokeWidth="1.3" /></svg></SquareBtn>
          </div>
          <div className="ml-2 h-[140px] w-[280px] shrink-0 border border-[#b4b4b4] bg-white pt-px pl-px">
            {layers.map((l) => (
              <div key={l.name} className={`${l.h} flex w-[277px] border-r border-b border-[#c8c8c8]`}>
                <div className="flex w-[27px] items-center justify-center border-r border-[#c8c8c8] pr-[7px]"><Eye on={l.on} /></div>
                <div className="flex w-7 items-center justify-center border-r border-[#c8c8c8] pr-[6px]"><Lock /></div>
                <div className="flex w-7 items-center justify-center border-r border-[#c8c8c8] pr-[6px]"><svg viewBox="2.6 2 19 19" preserveAspectRatio="none" className="h-[14px] w-[13px]"><Printer /></svg></div>
                <div className="flex w-7 items-center justify-center border-r border-[#c8c8c8] pr-[6px]"><Hash on={l.con} /></div>
                <div className={`${l.color} w-[27px]`} />
                <div className={`flex w-[120px] items-center pt-[2px] pl-1 ${l.con ? "leading-[15px] whitespace-normal" : ""} ${l.bold ? "font-bold text-black" : "tracking-[-0.28px]"}`}>{l.name}</div>
              </div>
            ))}
          </div>
          <div className="mt-[3px] ml-[6px] flex h-[25px] shrink-0 items-start">
            <div className="flex h-[23px] w-[119px] items-center justify-center rounded-b-[3px] border border-[#b9b9b9] bg-[#dcdcdc] pt-px tracking-[-0.28px]">Library Browser</div>
            <div className="flex h-[23px] w-[83px] items-center justify-center rounded-b-[3px] border border-l-0 border-[#b9b9b9] bg-[#dcdcdc] pt-px tracking-[-0.18px]">Block List</div>
            <div className="flex h-[25px] w-[82px] items-center justify-center rounded-b-[3px] border border-t-0 border-l-0 border-[#b9b9b9] bg-[#f7f7f7] pt-[2px] tracking-[-0.15px]">Layer List</div>
          </div>
          <div className="flex h-[7px] shrink-0 justify-center pt-[3px] pl-[9px]"><GripH rows={1} /></div>
          <DockTitle text="Command line" className="h-5" />
          <div className="ml-[7px] flex h-[23px] w-[282px] shrink-0 border border-[#b4b4b4] bg-white">
            <div className="flex grow items-center pt-[2px] pl-1 tracking-[-0.37px]">Loaded document: /home/garys/Link to</div>
            <div className="flex w-[14px] flex-col border-l border-[#b4b4b4] bg-[#f4f4f4]">
              <div className="flex h-[11px] items-center justify-center border-b border-[#b4b4b4]"><div className="rotate-180"><Caret /></div></div>
              <div className="flex h-[10px] items-center justify-center"><Caret /></div>
            </div>
          </div>
          <div className="flex h-[17px] shrink-0 items-center pl-[7px] tracking-[-0.35px]">Command:</div>
          <div className="ml-[7px] flex h-[25px] w-[282px] shrink-0 items-center border border-[#b4b4b4] pl-[2px]">
            <div className="h-[18px] w-[254px] bg-white" />
            <div className="ml-[2px]">
              <SquareBtn size="h-5 w-5"><svg viewBox="0 0 7 8" className="h-2 w-[7px]" stroke="#aaa"><path d="M0 1H7M0 4H7M0 7H7" /></svg></SquareBtn>
            </div>
          </div>
        </div>
      </div>

      {/* snap toolbar */}
      <div className="flex h-[38px] shrink-0 border-b border-[#b4b4b4] bg-linear-to-b from-[#fafafa] to-[#ebebeb] pt-[3px] pl-[5px]">
        <div className="flex h-8 w-2 items-center"><GripV /></div>
        <div className="w-[33px] pl-2 text-[14px] leading-8">Ex</div>
        <ToolRow table={snapIcons} items={["free", "grid", "endpoint", "entity", "center", "middle", "distance", "intersection", "|", "horiz", "vert", "ortho", "|", "relZero", "lockZero", ":", "dockLeft", "dockRight*", "dockTop", "dockBottom", "dockFloat", ":", "addMenu", "addToolbar"]} />
      </div>

      {/* status bar */}
      <div className="flex h-14 shrink-0 items-start pt-1 pl-[6px]">
        <div className="w-[185px]"><Coords /></div>
        <div className="h-[50px] w-px bg-[#999]" />
        <div className="w-[313px] pl-[6px]"><Coords /></div>
        <svg viewBox="505 908 66 50" className="h-[50px] w-[66px]" fill="none" stroke="#000" strokeWidth="2">
          <path d="M507.5 917.7C517 924 521 925 524 919C526 915 526 911 527 907M549 908V913" />
          <path d="M531 959V920Q531 913 538 913H561Q568 913 568 920V959" fill="#fff" />
          <path d="M531 933H568" />
          <rect x="543.5" y="913" width="12" height="19.5" fill={G} />
        </svg>
        <div className="flex pl-[124px]">
          {statusGroups.map(([a, b, w]) => (
            <div key={a} className={w}><div className="h-[25px] leading-[25px]">{a}</div><div className="h-[25px] leading-[25px]">{b}</div></div>
          ))}
        </div>
      </div>
    </div>
  );
}
